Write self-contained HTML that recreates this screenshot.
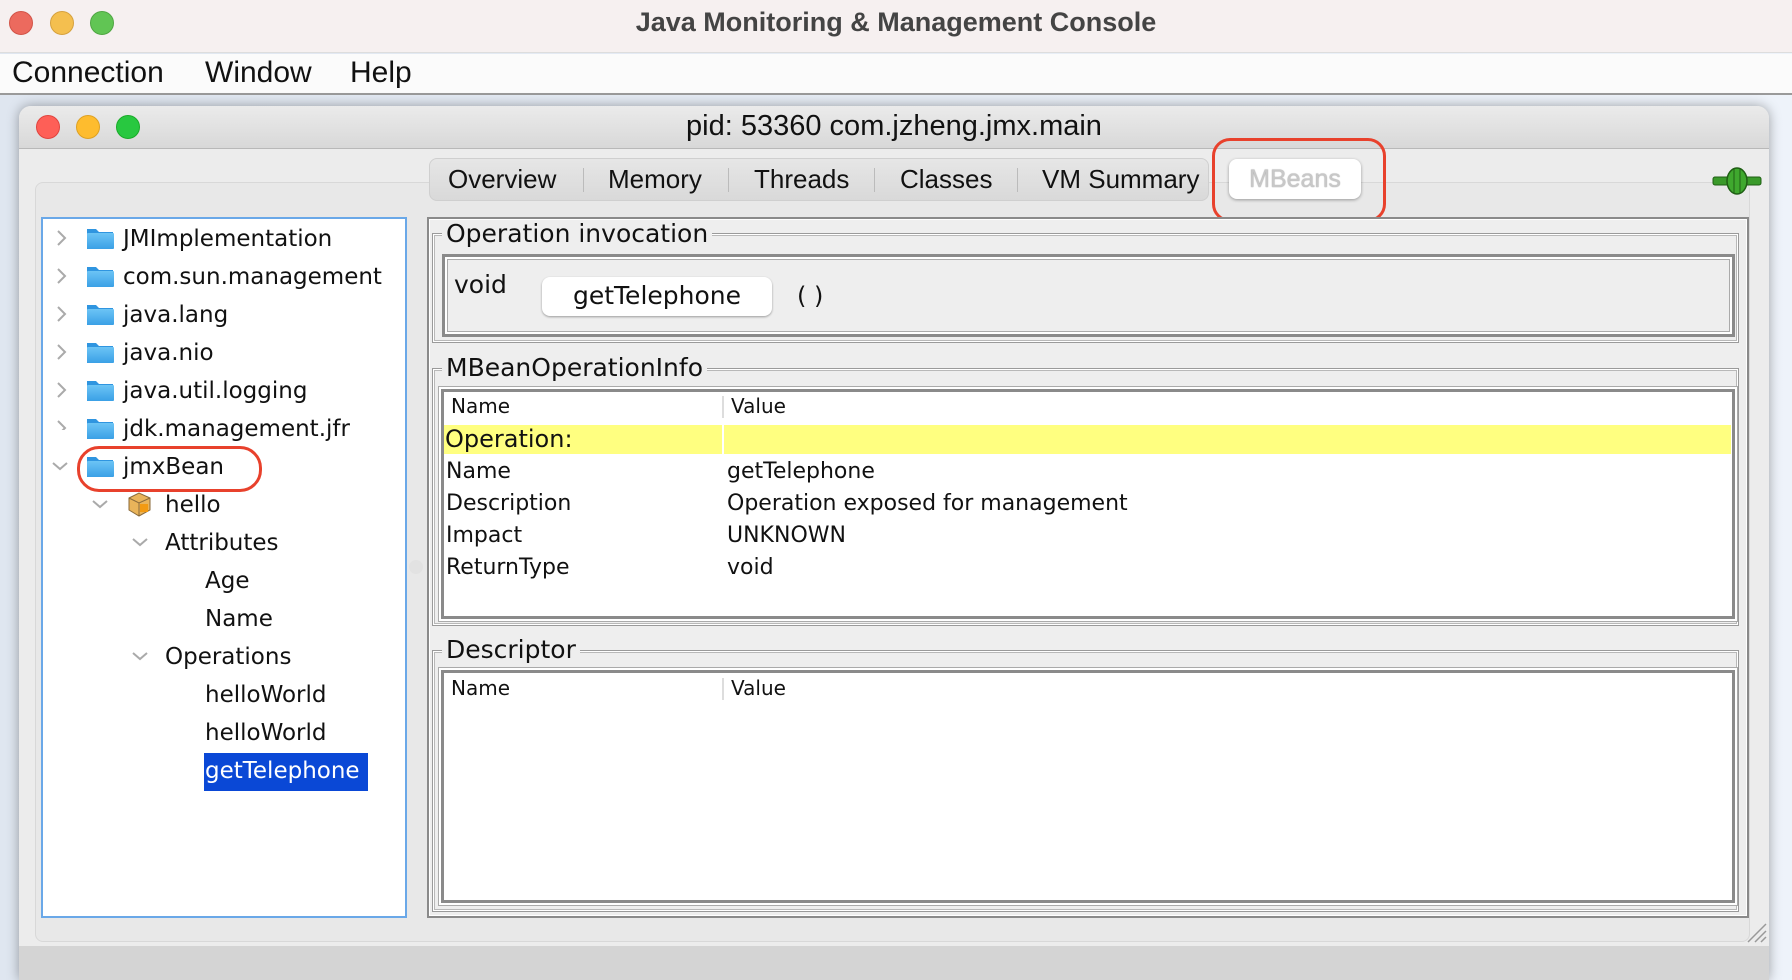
<!DOCTYPE html>
<html><head><meta charset="utf-8"><style>
*{box-sizing:border-box;margin:0;padding:0}
body{width:1792px;height:980px;overflow:hidden;position:relative;background:linear-gradient(90deg,#dfe6f0,#eef3fa);font-family:"DejaVu Sans",sans-serif;color:#111}
.a{position:absolute;white-space:nowrap}
.dot{position:absolute;width:24px;height:24px;border-radius:50%}
.ls{font-family:"Liberation Sans",sans-serif}
.grp{position:absolute;border:1px solid #9a9a9a;box-shadow:inset 0 0 0 1px #fff,inset 0 0 0 2px #b8b8b8}
.gt{position:absolute;background:#eeeeee;padding:0 4px;font-size:25px;line-height:28px}
.tbl{position:absolute;background:#fff;border:3px solid #8a8a8a;box-shadow:0 0 0 2px #fff,0 0 0 3px #aaa}
.r{position:absolute;font-size:22px;line-height:24px}
.fold{position:absolute;width:28px;height:24px}
.ti{position:absolute;font-size:23px;line-height:28px}
</style></head><body>
<div class="a" style="left:0;top:0;width:1792px;height:53px;background:#f6f0f0;border-bottom:1px solid #ddd"></div>
<div class="dot" style="left:9px;top:11px;background:#ec6a5e;border:1px solid #d25448"></div>
<div class="dot" style="left:50px;top:11px;background:#f4bf4f;border:1px solid #d6a13d"></div>
<div class="dot" style="left:90px;top:11px;background:#61c554;border:1px solid #4fa642"></div>
<div class="a ls" style="left:0;width:1792px;top:7px;text-align:center;font-size:27px;font-weight:bold;color:#444">Java Monitoring &amp; Management Console</div>
<div class="a" style="left:0;top:54px;width:1792px;height:41px;background:#fbfbfb;border-bottom:2px solid #9a9a9a"></div>
<div class="a ls" style="left:12px;top:55px;font-size:30px;line-height:36px">Connection</div>
<div class="a ls" style="left:205px;top:55px;font-size:30px;line-height:36px">Window</div>
<div class="a ls" style="left:350px;top:55px;font-size:30px;line-height:36px">Help</div>
<div class="a" style="left:19px;top:106px;width:1750px;height:874px;background:#ececec;border-radius:12px 12px 0 0;box-shadow:0 0 12px rgba(0,0,0,.35)"></div>
<div class="a" style="left:19px;top:106px;width:1750px;height:43px;background:linear-gradient(#ebebeb,#d8d8d8);border-radius:12px 12px 0 0;border-bottom:1px solid #b8b8b8"></div>
<div class="dot" style="left:36px;top:115px;background:#fe5f57;border:1px solid #e0443e"></div>
<div class="dot" style="left:76px;top:115px;background:#febc2e;border:1px solid #dea123"></div>
<div class="dot" style="left:116px;top:115px;background:#28c840;border:1px solid #1aab29"></div>
<div class="a ls" style="left:19px;width:1750px;top:110px;text-align:center;font-size:29px;color:#111">pid: 53360 com.jzheng.jmx.main</div>
<div class="a" style="left:35px;top:182px;width:1715px;height:760px;border:1px solid #d8d8d8;border-radius:8px;background:#e8e8e8"></div>
<div class="a" style="left:429px;top:158px;width:780px;height:43px;background:linear-gradient(#e6e6e6,#d9d9d9);border:1px solid #cfcfcf;border-radius:8px"></div>
<div class="a ls" style="left:448px;top:163px;font-size:26px;line-height:32px">Overview</div>
<div class="a" style="left:583px;top:168px;width:1px;height:24px;background:#bbb"></div>
<div class="a ls" style="left:608px;top:163px;font-size:26px;line-height:32px">Memory</div>
<div class="a" style="left:728px;top:168px;width:1px;height:24px;background:#bbb"></div>
<div class="a ls" style="left:754px;top:163px;font-size:26px;line-height:32px">Threads</div>
<div class="a" style="left:874px;top:168px;width:1px;height:24px;background:#bbb"></div>
<div class="a ls" style="left:900px;top:163px;font-size:26px;line-height:32px">Classes</div>
<div class="a" style="left:1017px;top:168px;width:1px;height:24px;background:#bbb"></div>
<div class="a ls" style="left:1042px;top:163px;font-size:26px;line-height:32px">VM Summary</div>
<div class="a ls" style="left:1229px;top:159px;width:132px;height:40px;background:#fff;border-radius:8px;box-shadow:0 1px 3px rgba(0,0,0,.35);text-align:center;font-size:25px;line-height:40px;color:#c8c8c8;text-shadow:0 0 1px #888">MBeans</div>
<div class="a" style="left:1212px;top:138px;width:174px;height:84px;border:3px solid #e8412c;border-radius:18px"></div>
<svg class="a" style="left:1712px;top:166px" width="50" height="30" viewBox="0 0 50 30"><rect x="1" y="11" width="48" height="8" rx="2" fill="#3a9a2a" stroke="#1f5f14"/><ellipse cx="25" cy="15" rx="10" ry="13" fill="#3fa82e" stroke="#1f5f14" stroke-width="1.5"/><line x1="22" y1="3" x2="22" y2="27" stroke="#1f5f14"/><line x1="28" y1="3" x2="28" y2="27" stroke="#1f5f14"/></svg>
<div class="a" style="left:41px;top:217px;width:366px;height:701px;background:#fff;border:2px solid #6aa8e8"></div>
<div class="a" style="left:409px;top:560px;width:14px;height:14px;border-radius:50%;background:#e2e2e2"></div>
<svg width="0" height="0" style="position:absolute"><defs><linearGradient id="fg" x1="0" y1="0" x2="0" y2="1"><stop offset="0" stop-color="#6cc4f5"/><stop offset="1" stop-color="#3aa0e6"/></linearGradient></defs></svg>
<svg class="a" style="left:56px;top:230px" width="12" height="200"><g fill="none" stroke="#aaa" stroke-width="2"><path d="M2 1l7 7-7 7"/><path d="M2 39l7 7-7 7"/><path d="M2 77l7 7-7 7"/><path d="M2 115l7 7-7 7"/><path d="M2 153l7 7-7 7"/><path d="M2 191l7 7-7 7"/></g></svg>
<svg class="fold" style="left:86px;top:226px" viewBox="0 0 28 24"><path d="M1 3h9l3 3h14v17H1z" fill="#2f95e0"/><rect x="1" y="7" width="27" height="16" rx="1" fill="url(#fg)"/></svg>
<div class="ti" style="left:123px;top:225px">JMImplementation</div>
<svg class="fold" style="left:86px;top:264px" viewBox="0 0 28 24"><path d="M1 3h9l3 3h14v17H1z" fill="#2f95e0"/><rect x="1" y="7" width="27" height="16" rx="1" fill="url(#fg)"/></svg>
<div class="ti" style="left:123px;top:263px">com.sun.management</div>
<svg class="fold" style="left:86px;top:302px" viewBox="0 0 28 24"><path d="M1 3h9l3 3h14v17H1z" fill="#2f95e0"/><rect x="1" y="7" width="27" height="16" rx="1" fill="url(#fg)"/></svg>
<div class="ti" style="left:123px;top:301px">java.lang</div>
<svg class="fold" style="left:86px;top:340px" viewBox="0 0 28 24"><path d="M1 3h9l3 3h14v17H1z" fill="#2f95e0"/><rect x="1" y="7" width="27" height="16" rx="1" fill="url(#fg)"/></svg>
<div class="ti" style="left:123px;top:339px">java.nio</div>
<svg class="fold" style="left:86px;top:378px" viewBox="0 0 28 24"><path d="M1 3h9l3 3h14v17H1z" fill="#2f95e0"/><rect x="1" y="7" width="27" height="16" rx="1" fill="url(#fg)"/></svg>
<div class="ti" style="left:123px;top:377px">java.util.logging</div>
<svg class="fold" style="left:86px;top:416px" viewBox="0 0 28 24"><path d="M1 3h9l3 3h14v17H1z" fill="#2f95e0"/><rect x="1" y="7" width="27" height="16" rx="1" fill="url(#fg)"/></svg>
<div class="ti" style="left:123px;top:415px">jdk.management.jfr</div>
<svg class="a" style="left:51px;top:460px" width="18" height="12"><path d="M2 3l7 6 7-6" fill="none" stroke="#aaa" stroke-width="2"/></svg>
<svg class="fold" style="left:86px;top:454px" viewBox="0 0 28 24"><path d="M1 3h9l3 3h14v17H1z" fill="#2f95e0"/><rect x="1" y="7" width="27" height="16" rx="1" fill="url(#fg)"/></svg>
<div class="ti" style="left:123px;top:453px">jmxBean</div>
<div class="a" style="left:77px;top:446px;width:185px;height:46px;border:3px solid #e8412c;border-radius:22px"></div>
<svg class="a" style="left:91px;top:498px" width="18" height="12"><path d="M2 3l7 6 7-6" fill="none" stroke="#aaa" stroke-width="2"/></svg>
<svg class="a" style="left:126px;top:491px" width="27" height="27" viewBox="0 0 27 27"><path d="M3 7l10-5 11 5v12l-11 6-10-6z" fill="#e9b45a" stroke="#8a6a3a"/><path d="M3 7l10 5 11-5M13 12v13" fill="none" stroke="#8a6a3a"/><rect x="14" y="13" width="8" height="8" fill="#f29a12"/></svg>
<div class="ti" style="left:165px;top:491px">hello</div>
<svg class="a" style="left:131px;top:536px" width="18" height="12"><path d="M2 3l7 6 7-6" fill="none" stroke="#aaa" stroke-width="2"/></svg>
<div class="ti" style="left:165px;top:529px">Attributes</div>
<div class="ti" style="left:205px;top:567px">Age</div>
<div class="ti" style="left:205px;top:605px">Name</div>
<svg class="a" style="left:131px;top:650px" width="18" height="12"><path d="M2 3l7 6 7-6" fill="none" stroke="#aaa" stroke-width="2"/></svg>
<div class="ti" style="left:165px;top:643px">Operations</div>
<div class="ti" style="left:205px;top:681px">helloWorld</div>
<div class="ti" style="left:205px;top:719px">helloWorld</div>
<div class="a" style="left:204px;top:753px;width:164px;height:38px;background:#0a48d6"></div>
<div class="ti" style="left:205px;top:757px;color:#fff">getTelephone</div>
<div class="a" style="left:427px;top:217px;width:1322px;height:701px;border:2px solid #8a8a8a;box-shadow:inset 0 0 0 1px #fff;background:#eeeeee"></div>
<div class="grp" style="left:432px;top:233px;width:1307px;height:110px"></div>
<div class="gt" style="left:442px;top:220px">Operation invocation</div>
<div class="a" style="left:442px;top:254px;width:1293px;height:83px;border:3px solid #8a8a8a;box-shadow:inset 0 0 0 2px #fff,inset 0 0 0 3px #aaa"></div>
<div class="a" style="left:454px;top:270px;font-size:25px">void</div>
<div class="a" style="left:542px;top:277px;width:230px;height:39px;background:#fff;border-radius:8px;box-shadow:0 1px 2px rgba(0,0,0,.35);text-align:center;font-size:25px;line-height:38px">getTelephone</div>
<div class="a" style="left:797px;top:282px;font-size:24px">( )</div>
<div class="grp" style="left:432px;top:368px;width:1307px;height:258px"></div>
<div class="gt" style="left:442px;top:354px">MBeanOperationInfo</div>
<div class="tbl" style="left:441px;top:389px;width:1294px;height:230px"></div>
<div class="a" style="left:722px;top:396px;width:2px;height:22px;background:#ddd"></div>
<div class="r" style="left:451px;top:394px;font-size:20px">Name</div>
<div class="r" style="left:731px;top:394px;font-size:20px">Value</div>
<div class="a" style="left:444px;top:425px;width:278px;height:29px;background:#ffff80"></div>
<div class="a" style="left:724px;top:425px;width:1007px;height:29px;background:#ffff80"></div>
<div class="r" style="left:445px;top:427px;font-size:24px">Operation:</div>
<div class="r" style="left:446px;top:460px">Name</div><div class="r" style="left:727px;top:460px">getTelephone</div>
<div class="r" style="left:446px;top:492px">Description</div><div class="r" style="left:727px;top:492px">Operation exposed for management</div>
<div class="r" style="left:446px;top:524px">Impact</div><div class="r" style="left:727px;top:524px">UNKNOWN</div>
<div class="r" style="left:446px;top:556px">ReturnType</div><div class="r" style="left:727px;top:556px">void</div>
<div class="grp" style="left:432px;top:650px;width:1307px;height:262px"></div>
<div class="gt" style="left:442px;top:636px">Descriptor</div>
<div class="tbl" style="left:441px;top:670px;width:1294px;height:233px"></div>
<div class="a" style="left:722px;top:678px;width:2px;height:22px;background:#ddd"></div>
<div class="r" style="left:451px;top:676px;font-size:20px">Name</div>
<div class="r" style="left:731px;top:676px;font-size:20px">Value</div>
<div class="a" style="left:19px;top:946px;width:1750px;height:34px;background:#d4d4d4"></div>
<svg class="a" style="left:1746px;top:922px" width="22" height="22"><path d="M2 20L20 2M9 20L20 9M15 20L20 15" stroke="#999" stroke-width="1.5"/></svg>
</body></html>
